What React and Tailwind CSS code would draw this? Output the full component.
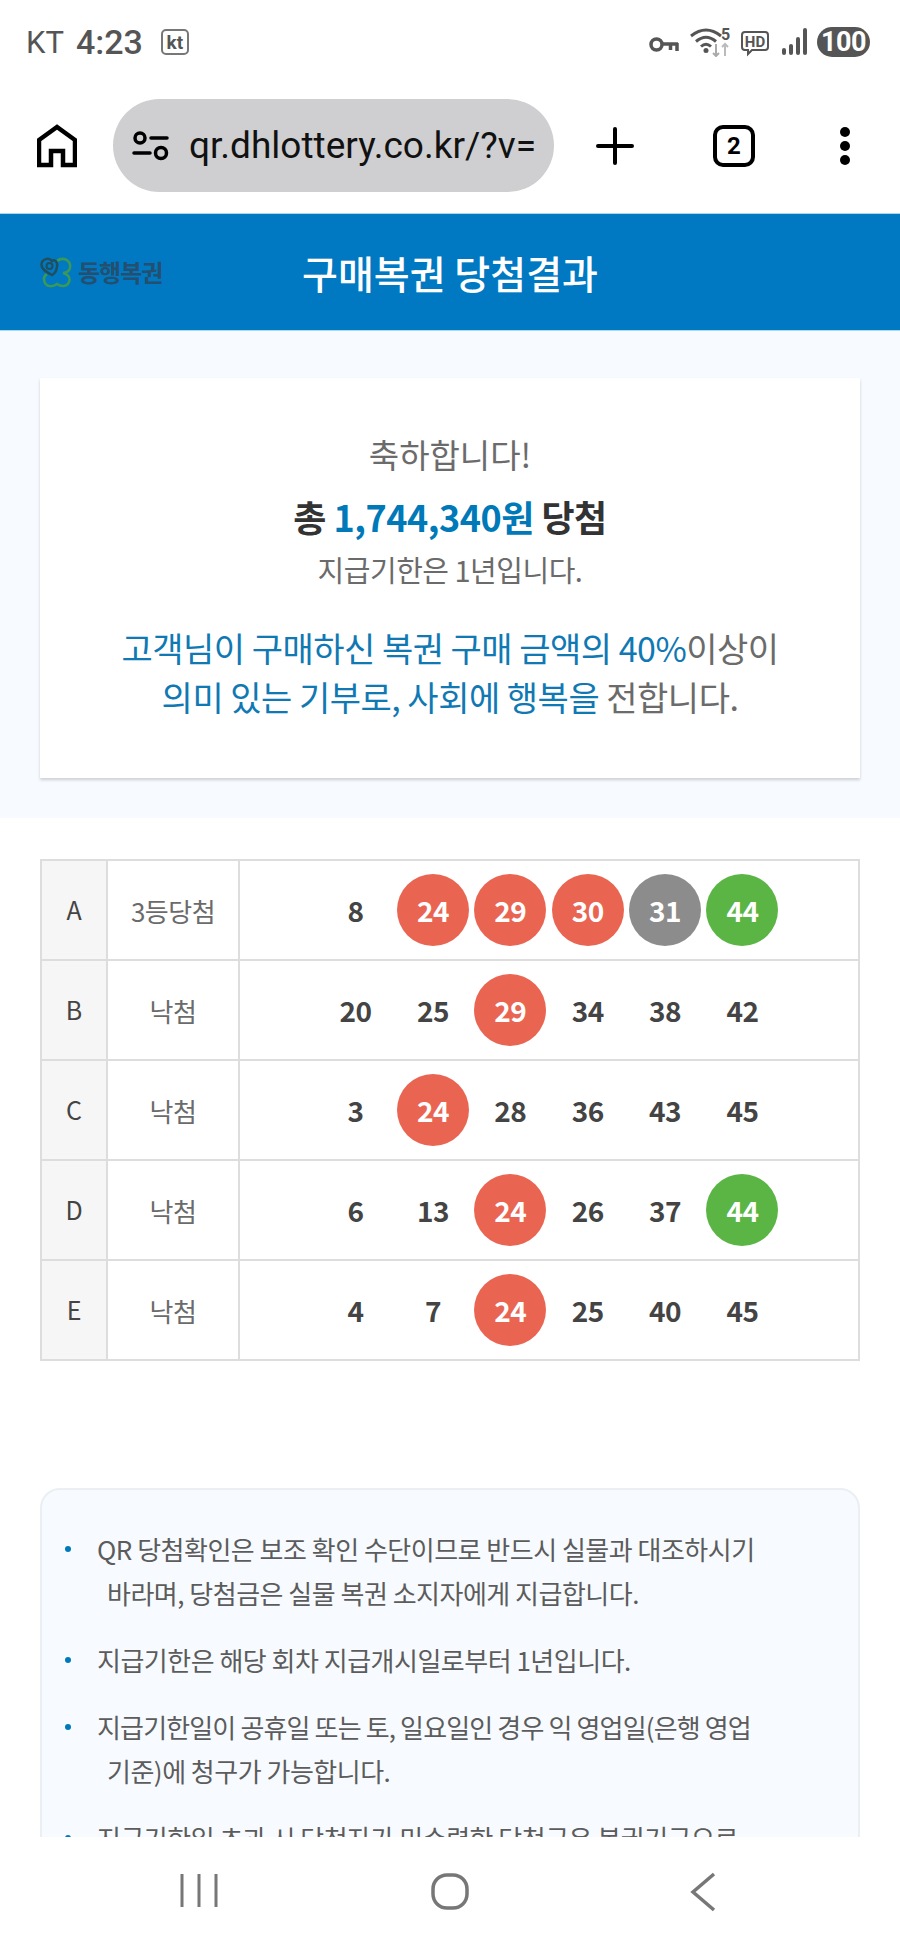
const rows = [
    { id: 'A', result: '3등당첨', nums: [[8], [24, 'r'], [29, 'r'], [30, 'r'], [31, 'g'], [44, 'n']] },
    { id: 'B', result: '낙첨', nums: [[20], [25], [29, 'r'], [34], [38], [42]] },
    { id: 'C', result: '낙첨', nums: [[3], [24, 'r'], [28], [36], [43], [45]] },
    { id: 'D', result: '낙첨', nums: [[6], [13], [24, 'r'], [26], [37], [44, 'n']] },
    { id: 'E', result: '낙첨', nums: [[4], [7], [24, 'r'], [25], [40], [45]] },
];

const ballStyles = {
    r: 'bg-[#e96552] text-white',
    g: 'bg-[#8c8c8c] text-white',
    n: 'bg-[#5ab544] text-white',
};

const notices = [
    ['QR 당첨확인은 보조 확인 수단이므로 반드시 실물과 대조하시기', '바라며, 당첨금은 실물 복권 소지자에게 지급합니다.'],
    ['지급기한은 해당 회차 지급개시일로부터 1년입니다.'],
    ['지급기한일이 공휴일 또는 토, 일요일인 경우 익 영업일(은행 영업', '기준)에 청구가 가능합니다.'],
    ['지급기한일 초과 시 당첨자가 미수령한 당첨금은 복권기금으로'],
];

const StatusBar = () => (
    <div className="flex h-[84px] items-center justify-between pl-[26px] pr-[30px] font-['Roboto',sans-serif] text-[#555]">
        <div className="flex items-center">
            <span className="text-[31px] leading-none">KT</span>
            <span className="ml-[12px] text-[34px] font-medium leading-none">4:23</span>
            <span className="ml-[18px] flex h-[26px] w-[28px] items-center justify-center rounded-[5px] border-2 border-[#777] text-[19px] font-bold leading-none">kt</span>
        </div>
        <div className="flex items-center">
            {/* key */}
            <svg width="30" height="30" viewBox="0 0 30 30" fill="none" stroke="#555" strokeWidth="3.5">
                <circle cx="7.500" cy="17.500" r="5.500" />
                <path d="M13 17h16M28 16v8M21.500 17v6" />
            </svg>
            {/* wifi */}
            <svg className="ml-[10px]" width="41" height="30" viewBox="0 0 41 30" fill="none">
                <path d="M2 9Q17-3 32 9M7 14.500Q17 6 27 14.500M12 19.500Q17 15 22 19.500" stroke="#555" strokeWidth="3" />
                <circle cx="17" cy="23.500" r="2.500" fill="#555" />
                <path d="M27 17v12M24 26l3 3 3-3" stroke="#aaa" strokeWidth="2" />
                <path d="M36 29V17M33 20l3-3 3 3" stroke="#bbb" strokeWidth="2" />
                <text x="32" y="13" fontSize="16" fontWeight="700" fill="#555" fontFamily="Roboto">5</text>
            </svg>
            {/* hd */}
            <svg className="ml-[10px]" width="30" height="30" viewBox="0 0 30 30" fill="none">
                <path d="M5 5h20a3 3 0 0 1 3 3v12a3 3 0 0 1-3 3H12l-4 4v-4H5a3 3 0 0 1-3-3V8a3 3 0 0 1 3-3z" stroke="#555" strokeWidth="2" />
                <text x="15" y="19.500" textAnchor="middle" fontSize="15" fontWeight="700" fill="#555" fontFamily="Roboto">HD</text>
            </svg>
            {/* signal */}
            <svg className="ml-[11px]" width="27" height="30" viewBox="0 0 27 30" fill="#555">
                <rect x="1" y="21" width="4" height="7" rx="2" />
                <rect x="8" y="17" width="4" height="11" rx="2" />
                <rect x="15" y="10" width="4" height="18" rx="2" />
                <rect x="22" y="1" width="4" height="27" rx="2" />
            </svg>
            <span className="ml-[9px] flex h-[30px] w-[53px] items-center justify-center rounded-full bg-[#555] text-[27px] font-bold leading-none tracking-[-0.5px] text-white">100</span>
        </div>
    </div>
);

const Toolbar = () => (
    <div className="flex h-[129px] items-start pl-[37px] pt-[15px]">
        <svg className="mt-[25px]" width="40" height="44" viewBox="0 0 40 44" fill="none" stroke="#000" strokeWidth="4.500" strokeLinejoin="miter">
            <path d="M2 41V16L20 3l18 13v25H26V27H14v14z" />
        </svg>
        <div className="ml-[36px] flex h-[93px] w-[441px] items-center overflow-hidden rounded-full bg-[#cfcfd1] pl-[19px]">
            <svg className="shrink-0" width="37" height="30" viewBox="0 0 37 30" fill="none" stroke="#000" strokeWidth="3.500" strokeLinecap="round">
                <circle cx="8" cy="7" r="5" />
                <path d="M19 7h16M2 22h16" />
                <circle cx="29" cy="22" r="5.500" />
            </svg>
            <span className="ml-[20px] whitespace-nowrap font-['Roboto',sans-serif] text-[37px] leading-none text-[#111]">qr.dhlottery.co.kr/?v=</span>
        </div>
        <svg className="ml-[42px] mt-[28px]" width="38" height="38" viewBox="0 0 38 38" stroke="#000" strokeWidth="4" strokeLinecap="round">
            <path d="M19 2v34M2 19h34" />
        </svg>
        <div className="ml-[79px] mt-[26px] flex h-[42px] w-[42px] items-center justify-center rounded-[10px] border-[4px] border-black font-['Roboto',sans-serif] text-[24px] font-bold leading-none text-black">2</div>
        <div className="ml-[85px] mt-[28px] flex flex-col gap-[4px]">
            <span className="h-[10px] w-[10px] rounded-full bg-black" />
            <span className="h-[10px] w-[10px] rounded-full bg-black" />
            <span className="h-[10px] w-[10px] rounded-full bg-black" />
        </div>
    </div>
);

const Header = () => (
    <div className="grid h-[118px] grid-cols-[1fr_auto_1fr] items-center border-y border-[#a9d8f2] bg-[#0079c2] text-white">
        <div className="flex items-center pl-[40px]">
            <svg width="32" height="32" viewBox="0 0 32 32" fill="none" strokeWidth="2.500">
                <path d="M17 5C22 1 29 3 30 9s-4 8-7 8c4 1 8 4 6 9s-8 5-12 2c-4 3-10 3-12-1s-1-7 2-9" stroke="#3a9a55" />
                <path d="M12 19C6 16 1 13 1.500 8S9 1 12 5c3-2 6 1 5 6s-2 6-5 8z" stroke="#1f4f5c" />
                <circle cx="9.500" cy="10" r="3" stroke="#1f4f5c" strokeWidth="2" />
            </svg>
            <span className="ml-[6px] text-[24px] font-bold leading-none tracking-[-1px] text-[#234f70]">동행복권</span>
        </div>
        <div className="text-[39px] font-medium leading-none">구매복권 당첨결과</div>
        <div />
    </div>
);

const Summary = () => (
    <div className="bg-[#f7fbff] px-[40px] pb-[40px] pt-[47px]">
        <div className="flex h-[400px] flex-col items-center bg-white pt-[52px] text-center shadow-[0_2px_3px_rgba(0,0,0,0.18)]">
            <p className="text-[33px] leading-[48px] text-[#6b6b6b]">축하합니다!</p>
            <p className="mt-[14px] text-[36px] font-bold leading-[48px] tracking-[-0.5px] text-[#333]">
                총 <span className="text-[#0079b8]">1,744,340원</span> 당첨
            </p>
            <p className="mt-[5px] text-[29px] leading-[48px] tracking-[-0.5px] text-[#6b6b6b]">지급기한은 1년입니다.</p>
            <p className="mt-[30px] text-[34px] leading-[49px] tracking-[-0.5px] text-[#6b6b6b]">
                <span className="text-[#1079b3]">고객님이 구매하신 복권 구매 금액의 40%</span>이상이
                <br />
                <span className="text-[#1079b3]">의미 있는 기부로, 사회에 행복을</span> 전합니다.
            </p>
        </div>
    </div>
);

const ResultTable = () => (
    <table className="mx-[40px] mt-[41px] w-[820px] table-fixed border-collapse">
        <tbody>
            {rows.map((row) => (
                <tr key={row.id} className="h-[100px]">
                    <td className="w-[66px] border-2 border-[#ddd] bg-[#f6f6f6] text-center text-[25px] text-[#444]">{row.id}</td>
                    <td className="w-[132px] border-2 border-[#ddd] text-center text-[26px] tracking-[-0.5px] text-[#6b6b6b]">{row.result}</td>
                    <td className="border-2 border-[#ddd]">
                        <div className="flex justify-center gap-[5.400px]">
                            {row.nums.map(([n, kind]) => (
                                <span
                                    key={n}
                                    className={`flex h-[72px] w-[72px] items-center justify-center rounded-full text-[28px] font-bold tracking-[-0.5px] ${kind ? ballStyles[kind] : 'text-[#444]'}`}
                                >
                                    {n}
                                </span>
                            ))}
                        </div>
                    </td>
                </tr>
            ))}
        </tbody>
    </table>
);

const Notice = () => (
    <div className="mx-[40px] mt-[127px] rounded-[20px] border-2 border-[#eaeff4] bg-[#f7fbff] pl-[23px] pt-[37px]">
        <ul className="flex flex-col gap-[23px]">
            {notices.map((lines, i) => (
                <li key={i} className="flex text-[26px] leading-[44px] tracking-[-0.5px] text-[#5c5c5c]">
                    <span className="mt-[19px] h-[6px] w-[6px] shrink-0 rounded-full bg-[#0079b8]" />
                    <div className="ml-[26px]">
                        {lines.map((line, j) => (
                            <div key={j} className={`${j > 0 ? 'pl-[10px]' : ''} ${i === 2 && j === 0 ? 'tracking-[-0.85px]' : ''}`}>{line}</div>
                        ))}
                    </div>
                </li>
            ))}
        </ul>
    </div>
);

const NavBar = () => (
    <div className="grid h-[113px] grid-cols-3 items-start bg-white px-[73px] pt-[35px]">
        <svg className="justify-self-center" width="38" height="38" viewBox="0 0 38 38" stroke="#777" strokeWidth="3">
            <path d="M2 2v33M19 2v33M36 2v33" />
        </svg>
        <svg className="justify-self-center" width="38" height="38" viewBox="0 0 38 38" fill="none" stroke="#777" strokeWidth="3.500">
            <rect x="2" y="3" width="34" height="33" rx="14" />
        </svg>
        <svg className="ml-[3px] justify-self-center" width="26" height="40" viewBox="0 0 26 40" fill="none" stroke="#777" strokeWidth="3.500">
            <path d="M24 2L3 20l21 18" />
        </svg>
    </div>
);

const App = () => (
    <div className="flex h-[1950px] w-[900px] flex-col overflow-hidden bg-white font-['Noto_Sans_CJK_KR',sans-serif]">
        <StatusBar />
        <Toolbar />
        <div className="min-h-0 flex-1 overflow-hidden">
            <Header />
            <Summary />
            <ResultTable />
            <Notice />
        </div>
        <NavBar />
    </div>
);

export default App;
